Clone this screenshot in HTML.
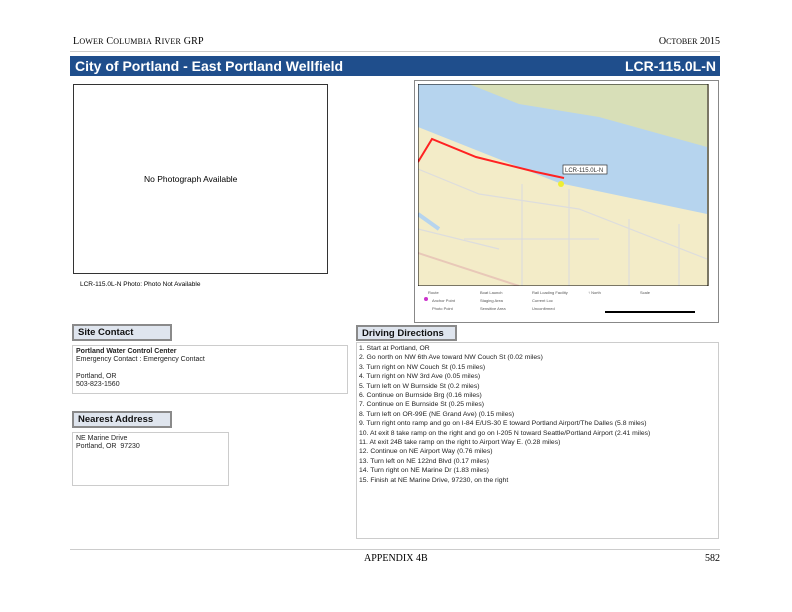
<!DOCTYPE html>
<html><head><meta charset="utf-8"><style>
body{margin:0;width:792px;height:612px;background:#fff;position:relative;font-family:"Liberation Sans",sans-serif;overflow:hidden}
.a{position:absolute}
.serif{font-family:"Liberation Serif",serif}
.lbl{position:absolute;background:#dfe5ee;border:2px solid #8a8a8a;box-sizing:border-box;font-size:9.5px;font-weight:bold;padding:1px 4px;color:#111}
.box{position:absolute;border:1px solid #ccc;box-sizing:border-box}
.dd{font-size:6.8px;line-height:9.4px;color:#222;padding:1px 2px;white-space:nowrap}
.lg{position:absolute;font-size:4px;color:#555;white-space:nowrap}
</style></head><body>
<div class="a serif" style="left:73px;top:36px;font-size:10px;letter-spacing:.2px">L<span style="font-size:8px">OWER</span> C<span style="font-size:8px">OLUMBIA</span> R<span style="font-size:8px">IVER</span> GRP</div>
<div class="a serif" style="right:72px;top:36px;font-size:10px">O<span style="font-size:8px">CTOBER</span> 2015</div>
<div class="a" style="left:70px;top:51px;width:650px;height:1px;background:#ccc"></div>
<div class="a" style="left:70px;top:56px;width:650px;height:20px;background:#1f4e8c;color:#fff;font-weight:bold;font-size:14px;line-height:20px">
<span style="position:absolute;left:5px">City of Portland - East Portland Wellfield</span><span style="position:absolute;right:4px">LCR-115.0L-N</span></div>
<div class="box" style="left:73px;top:84px;width:255px;height:190px;border-color:#333"></div>
<div class="a" style="left:144px;top:174px;font-size:8.5px">No Photograph Available</div>
<div class="a" style="left:80px;top:281px;font-size:6.5px">LCR-115.0L-N Photo: Photo Not Available</div>
<div class="box" style="left:414px;top:80px;width:305px;height:243px;border:1px solid #888"></div>
<svg class="a" style="left:418px;top:84px" width="291" height="202" viewBox="419 85 291 202">
<rect x="419" y="85" width="291" height="202" fill="#f3ecc8"/>
<polygon points="419,85 708,85 708,215 560,184 419,128" fill="#b6d4ee"/>
<polygon points="470,85 708,85 708,148 600,118 520,105" fill="#d8dfb8"/>
<path d="M419,215 L440,230" stroke="#b6d4ee" stroke-width="4"/>
<g stroke="#ddd" stroke-width="1.2" fill="none"><path d="M419,170 L480,195 L580,210 L708,260"/><path d="M523,185 L523,287"/><path d="M570,190 L570,287"/><path d="M465,240 L600,240"/><path d="M630,220 L630,287"/><path d="M680,225 L680,287"/><path d="M419,230 L500,250"/></g>
<path d="M419,254 L520,287" stroke="#e8c8b8" stroke-width="2"/>
<polyline points="419,163 433,140 477,158 537,173 565,179" stroke="#f22" stroke-width="2" fill="none"/>
<rect x="564" y="166" width="44" height="9" fill="#fff" stroke="#333" stroke-width=".7"/>
<text x="566" y="173" font-size="6" fill="#333">LCR-115.0L-N</text>
<circle cx="562" cy="185" r="3" fill="#ee3"/>
<rect x="419" y="85" width="290" height="202" fill="none" stroke="#000"/>
</svg>
<div class="lg" style="left:428px;top:290px">Route</div>
<div class="lg" style="left:432px;top:298px">Anchor Point</div>
<div class="lg" style="left:432px;top:306px">Photo Point</div>
<div class="lg" style="left:480px;top:290px">Boat Launch</div>
<div class="lg" style="left:480px;top:298px">Staging Area</div>
<div class="lg" style="left:480px;top:306px">Sensitive Area</div>
<div class="lg" style="left:532px;top:290px">Rail Loading Facility</div>
<div class="lg" style="left:532px;top:298px">Current Loc</div>
<div class="lg" style="left:532px;top:306px">Unconfirmed</div>
<div class="lg" style="left:588px;top:290px">↑ North</div>
<div class="lg" style="left:640px;top:290px">Scale</div>
<div class="a" style="left:424px;top:297px;width:4px;height:4px;border-radius:2px;background:#c3c"></div>
<div class="a" style="left:605px;top:311px;width:90px;height:2px;background:#000"></div>
<div class="lbl" style="left:72px;top:324px;width:100px;height:17px">Site Contact</div>
<div class="box" style="left:72px;top:345px;width:276px;height:49px;font-size:7px;line-height:8.2px;padding:2px 3px;color:#222"><b>Portland Water Control Center</b><br>Emergency Contact : Emergency Contact<br><br>Portland, OR<br>503-823-1560</div>
<div class="lbl" style="left:72px;top:411px;width:100px;height:17px">Nearest Address</div>
<div class="box" style="left:72px;top:432px;width:157px;height:54px;font-size:7px;line-height:8.2px;padding:2px 3px;color:#222">NE Marine Drive<br>Portland, OR&nbsp; 97230</div>
<div class="lbl" style="left:356px;top:325px;width:101px;height:16px">Driving Directions</div>
<div class="box dd" style="left:356px;top:342px;width:363px;height:197px">1. Start at Portland, OR<br>2. Go north on NW 6th Ave toward NW Couch St (0.02 miles)<br>3. Turn right on NW Couch St (0.15 miles)<br>4. Turn right on NW 3rd Ave (0.05 miles)<br>5. Turn left on W Burnside St (0.2 miles)<br>6. Continue on Burnside Brg (0.16 miles)<br>7. Continue on E Burnside St (0.25 miles)<br>8. Turn left on OR-99E (NE Grand Ave) (0.15 miles)<br>9. Turn right onto ramp and go on I-84 E/US-30 E toward Portland Airport/The Dalles (5.8 miles)<br>10. At exit 8 take ramp on the right and go on I-205 N toward Seattle/Portland Airport (2.41 miles)<br>11. At exit 24B take ramp on the right to Airport Way E. (0.28 miles)<br>12. Continue on NE Airport Way (0.76 miles)<br>13. Turn left on NE 122nd Blvd (0.17 miles)<br>14. Turn right on NE Marine Dr (1.83 miles)<br>15. Finish at NE Marine Drive, 97230, on the right</div>
<div class="a" style="left:70px;top:549px;width:650px;height:1px;background:#ccc"></div>
<div class="a serif" style="left:364px;top:553px;font-size:10px">APPENDIX 4B</div>
<div class="a serif" style="right:72px;top:553px;font-size:10px">582</div>
</body></html>
